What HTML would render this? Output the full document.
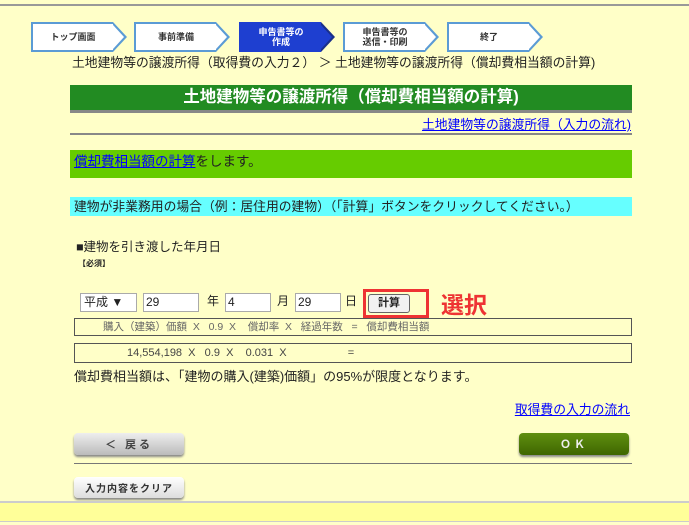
<!DOCTYPE html>
<html><head><meta charset="utf-8"><style>
body{margin:0;width:689px;height:525px;background:#ffffc8;font-family:"Liberation Sans","Noto Sans CJK JP",sans-serif;position:relative;overflow:hidden;font-size:12px;color:#222}
.a{position:absolute}
.step{position:absolute;top:22px;height:26px;width:80px;background:#fff;border:2px solid #5b9bd5;border-right:none;font-size:9px;display:flex;align-items:center;justify-content:center;text-align:center;line-height:10px;font-weight:bold;color:#333}
.step:after{content:"";position:absolute;right:-14px;top:-2px;width:0;height:0;border-top:15px solid transparent;border-bottom:15px solid transparent;border-left:14px solid #5b9bd5}
.step:before{content:"";position:absolute;right:-11px;top:1px;width:0;height:0;border-top:12px solid transparent;border-bottom:12px solid transparent;border-left:11px solid #fff;z-index:2}
.cur{background:#1e3fd0;color:#fff;border-color:#1e3fd0}
.cur:after{border-left-color:#1a2f8a}.cur:before{border-left-color:#1e3fd0}
a{color:#00f;text-decoration:underline}
.btn{position:absolute;border-radius:4px;box-shadow:0 2px 2px #888;font-size:11px;display:flex;align-items:center;justify-content:center;font-weight:bold;letter-spacing:3px}
</style></head><body>
<div class="a" style="left:0;top:4px;width:689px;height:2px;background:#999"></div>
<div class="step" style="left:31px">トップ画面</div>
<div class="step" style="left:134px">事前準備</div>
<div class="step cur" style="left:239px">申告書等の<br>作成</div>
<div class="step" style="left:343px">申告書等の<br>送信・印刷</div>
<div class="step" style="left:447px">終了</div>
<div class="a" style="left:72px;top:52px;font-size:12.8px">土地建物等の譲渡所得（取得費の入力２） ＞ 土地建物等の譲渡所得（償却費相当額の計算)</div>
<div class="a" style="left:70px;top:85px;width:562px;height:25px;background:#228b22;color:#fff;font-weight:bold;font-size:16.5px;text-align:center;line-height:25px">土地建物等の譲渡所得（償却費相当額の計算)</div>
<div class="a" style="left:70px;top:110px;width:562px;height:3px;background:#888"></div>
<div class="a" style="right:58px;top:114px;font-size:12.8px"><a>土地建物等の譲渡所得（入力の流れ)</a></div>
<div class="a" style="left:70px;top:133px;width:562px;height:2px;background:#888"></div>
<div class="a" style="left:70px;top:150px;width:562px;height:28px;background:#66cc00;font-size:13.5px;line-height:24px;padding-left:4px;box-sizing:border-box"><a>償却費相当額の計算</a>をします。</div>
<div class="a" style="left:70px;top:197px;width:562px;height:19px;background:#66ffff;font-size:12.8px;line-height:19px;padding-left:4px;box-sizing:border-box">建物が非業務用の場合（例：居住用の建物）（「計算」ボタンをクリックしてください。）</div>
<div class="a" style="left:76px;top:236px;font-size:12.5px">■建物を引き渡した年月日</div>
<div class="a" style="left:78px;top:258px;font-size:8px;font-weight:bold">【必須】</div>
<div class="a" style="left:80px;top:293px;width:57px;background:#fff;border:1px solid #aaa;font-size:12px;line-height:17px;padding-left:3px;box-sizing:border-box;height:19px">平成 ▼</div>
<div class="a" style="left:143px;top:293px;width:56px;height:19px;background:#fff;border:1px solid #aaa;box-sizing:border-box;font-size:12px;line-height:17px;padding-left:2px">29</div>
<div class="a" style="left:207px;top:292px">年</div>
<div class="a" style="left:225px;top:293px;width:46px;height:19px;background:#fff;border:1px solid #aaa;box-sizing:border-box;font-size:12px;line-height:17px;padding-left:2px">4</div>
<div class="a" style="left:277px;top:292px">月</div>
<div class="a" style="left:295px;top:293px;width:46px;height:19px;background:#fff;border:1px solid #aaa;box-sizing:border-box;font-size:12px;line-height:17px;padding-left:2px">29</div>
<div class="a" style="left:345px;top:292px">日</div>
<div class="a" style="left:363px;top:289px;width:66px;height:29px;border:3px solid #e33;box-sizing:border-box"></div>
<div class="a" style="left:368px;top:294px;width:40px;height:17px;background:#f2f2f2;border:1px solid #666;border-radius:3px;font-size:11px;text-align:center;line-height:17px;font-weight:bold">計算</div>
<div class="a" style="left:441px;top:286px;color:#e33;font-size:23px;font-weight:bold">選択</div>
<div class="a" style="left:74px;top:318px;width:558px;height:18px;border:1px solid #555;box-sizing:border-box;font-size:10.5px;color:#666;line-height:16px;padding-left:28px;white-space:pre">購入（建築）価額  X   0.9  X    償却率  X   経過年数   =   償却費相当額</div>
<div class="a" style="left:74px;top:343px;width:558px;height:20px;border:1px solid #555;box-sizing:border-box;font-size:11px;color:#444;line-height:18px;padding-left:52px;white-space:pre">14,554,198  X   0.9  X    0.031  X                    =</div>
<div class="a" style="left:74px;top:366px;font-size:13px">償却費相当額は、「建物の購入(建築)価額」の95%が限度となります。</div>
<div class="a" style="right:59px;top:399px;font-size:12.8px"><a>取得費の入力の流れ</a></div>
<div class="btn" style="left:74px;top:433px;width:110px;height:22px;background:linear-gradient(#eee,#bbb);color:#444">＜ 戻る</div>
<div class="btn" style="left:519px;top:433px;width:110px;height:22px;background:linear-gradient(#5f8f10,#3f6600);color:#eee">ＯＫ</div>
<div class="a" style="left:74px;top:463px;width:558px;height:1px;background:#777"></div>
<div class="btn" style="left:74px;top:477px;width:110px;height:21px;background:linear-gradient(#fff,#ddd);color:#333;letter-spacing:1px;font-size:10px">入力内容をクリア</div>
<div class="a" style="left:0;top:501px;width:689px;height:2px;background:#ccc"></div>
<div class="a" style="left:0;top:503px;width:689px;height:18px;background:#ffff99"></div>
<div class="a" style="left:0;top:521px;width:689px;height:1px;background:#ccc"></div>
</body></html>
